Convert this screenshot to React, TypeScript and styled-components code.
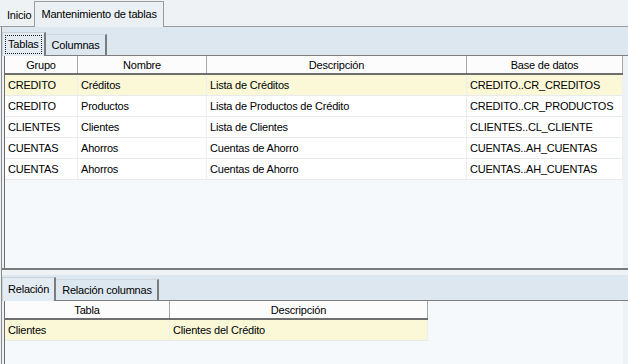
import React from "react";
import styled, { createGlobalStyle } from "styled-components";

interface TableRow {
  grupo: string;
  nombre: string;
  descripcion: string;
  base: string;
}

const tablas: TableRow[] = [
  { grupo: "CREDITO", nombre: "Créditos", descripcion: "Lista de Créditos", base: "CREDITO..CR_CREDITOS" },
  { grupo: "CREDITO", nombre: "Productos", descripcion: "Lista de Productos de Crédito", base: "CREDITO..CR_PRODUCTOS" },
  { grupo: "CLIENTES", nombre: "Clientes", descripcion: "Lista de Clientes", base: "CLIENTES..CL_CLIENTE" },
  { grupo: "CUENTAS", nombre: "Ahorros", descripcion: "Cuentas de Ahorro", base: "CUENTAS..AH_CUENTAS" },
  { grupo: "CUENTAS", nombre: "Ahorros", descripcion: "Cuentas de Ahorro", base: "CUENTAS..AH_CUENTAS" },
];

const relaciones = [{ tabla: "Clientes", descripcion: "Clientes del Crédito" }];

const TOP_COLS = "73px 129px 260px 156px";
const BOTTOM_COLS = "165px 258px";

const GlobalStyle = createGlobalStyle`
  body {
    margin: 0;
    background: #eef2f5;
  }
  * {
    box-sizing: border-box;
  }
`;

const Window = styled.div`
  width: 628px;
  height: 364px;
  overflow: hidden;
  display: flex;
  flex-direction: column;
  background: #eef2f5;
  font-family: "Liberation Sans", Arial, sans-serif;
  font-size: 11px;
  letter-spacing: -0.2px;
  color: #000;
`;

const TopTabs = styled.div`
  height: 27px;
  flex: none;
  display: flex;
  align-items: flex-end;
  padding-left: 4px;
  border-bottom: 1px solid #9a9a9a;
`;

const TopTab = styled.div<{ $active?: boolean }>`
  height: ${(p) => (p.$active ? "26px" : "22px")};
  padding: 0 ${(p) => (p.$active ? "6px" : "3px")};
  padding-bottom: ${(p) => (p.$active ? "2px" : "1px")};
  display: flex;
  align-items: center;
  margin-bottom: ${(p) => (p.$active ? "-1px" : "0")};
  background: ${(p) => (p.$active ? "#eaf0f4" : "transparent")};
  border: ${(p) => (p.$active ? "1px solid #9c9c9c" : "none")};
  border-bottom: none;
`;

const Content = styled.div`
  flex: 1;
  display: flex;
  flex-direction: column;
  margin-left: 1px;
  border-left: 1px solid #8a8a8a;
  min-height: 0;
`;

const Pane = styled.div<{ $height?: number }>`
  display: flex;
  flex-direction: column;
  ${(p) => (p.$height ? `height: ${p.$height}px; flex: none;` : "flex: 1;")}
  min-height: 0;
`;

const Strip = styled.div<{ $height: number }>`
  height: ${(p) => p.$height}px;
  flex: none;
  display: flex;
  align-items: flex-end;
  background: #dde7f0;
  border-bottom: 1px solid #7e7e7e;
`;

const InnerTab = styled.div<{ $active?: boolean; $focus?: boolean }>`
  height: ${(p) => (p.$active ? "24px" : "21px")};
  padding: 0 ${(p) => (p.$active ? "2px" : "5px")};
  display: flex;
  align-items: center;
  background: ${(p) => (p.$active ? "#e4ecf3" : "#dde7f0")};
  border-left: 1px solid ${(p) => (p.$active ? "#c8d0d8" : "transparent")};
  border-top: 1px solid ${(p) => (p.$active ? "#c8d0d8" : "#d0d8e0")};
  border-right: 2px solid #7c7c7c;
  margin-bottom: ${(p) => (p.$active ? "-1px" : "0")};

  span {
    display: flex;
    align-items: center;
    height: 19px;
    padding: 0 3px 1px;
    outline: ${(p) => (p.$focus ? "1px dotted #222" : "none")};
    outline-offset: -1px;
  }
`;

const GridArea = styled.div`
  flex: 1;
  margin-left: 2px;
  margin-right: 5px;
  background: #f5f9fc;
  border-left: 1px solid #6e6e6e;
`;

const GridRow = styled.div<{ $cols: string; $selected?: boolean }>`
  display: grid;
  width: max-content;
  grid-template-columns: ${(p) => p.$cols};
  height: 21px;
  background: ${(p) => (p.$selected ? "#fbf8d8" : "#fff")};
  border-bottom: 1px solid #e8ebee;
`;

const HeaderRow = styled.div<{ $cols: string }>`
  display: grid;
  width: max-content;
  grid-template-columns: ${(p) => p.$cols};
  height: 19px;
  background: #fcfcfc;
  border-bottom: 2px solid #6f6f6f;
`;

const HeadCell = styled.div`
  display: flex;
  align-items: center;
  justify-content: center;
  border-right: 1px solid #a8a8a8;
`;

const Cell = styled.div`
  display: flex;
  align-items: center;
  padding-left: 3px;
  white-space: nowrap;
  overflow: hidden;
  border-right: 1px solid #eeeeee;
`;

const Splitter = styled.div`
  height: 7px;
  flex: none;
  border-top: 2px solid #7b7b7b;
  background: #eef2f5;
`;

const App: React.FC = () => {
  return (
    <>
      <GlobalStyle />
      <Window>
        <TopTabs>
          <TopTab>Inicio</TopTab>
          <TopTab $active>Mantenimiento de tablas</TopTab>
        </TopTabs>
        <Content>
          <Pane $height={241}>
            <Strip $height={29}>
              <InnerTab $active $focus>
                <span>Tablas</span>
              </InnerTab>
              <InnerTab>Columnas</InnerTab>
            </Strip>
            <GridArea>
              <HeaderRow $cols={TOP_COLS}>
                <HeadCell>Grupo</HeadCell>
                <HeadCell>Nombre</HeadCell>
                <HeadCell>Descripción</HeadCell>
                <HeadCell>Base de datos</HeadCell>
              </HeaderRow>
              {tablas.map((row, i) => (
                <GridRow key={i} $cols={TOP_COLS} $selected={i === 0}>
                  <Cell>{row.grupo}</Cell>
                  <Cell>{row.nombre}</Cell>
                  <Cell>{row.descripcion}</Cell>
                  <Cell>{row.base}</Cell>
                </GridRow>
              ))}
            </GridArea>
          </Pane>
          <Splitter />
          <Pane>
            <Strip $height={26}>
              <InnerTab $active>
                <span>Relación</span>
              </InnerTab>
              <InnerTab>Relación columnas</InnerTab>
            </Strip>
            <GridArea>
              <HeaderRow $cols={BOTTOM_COLS}>
                <HeadCell>Tabla</HeadCell>
                <HeadCell>Descripción</HeadCell>
              </HeaderRow>
              {relaciones.map((row, i) => (
                <GridRow key={i} $cols={BOTTOM_COLS} $selected={i === 0}>
                  <Cell>{row.tabla}</Cell>
                  <Cell>{row.descripcion}</Cell>
                </GridRow>
              ))}
            </GridArea>
          </Pane>
        </Content>
      </Window>
    </>
  );
};

export default App;
